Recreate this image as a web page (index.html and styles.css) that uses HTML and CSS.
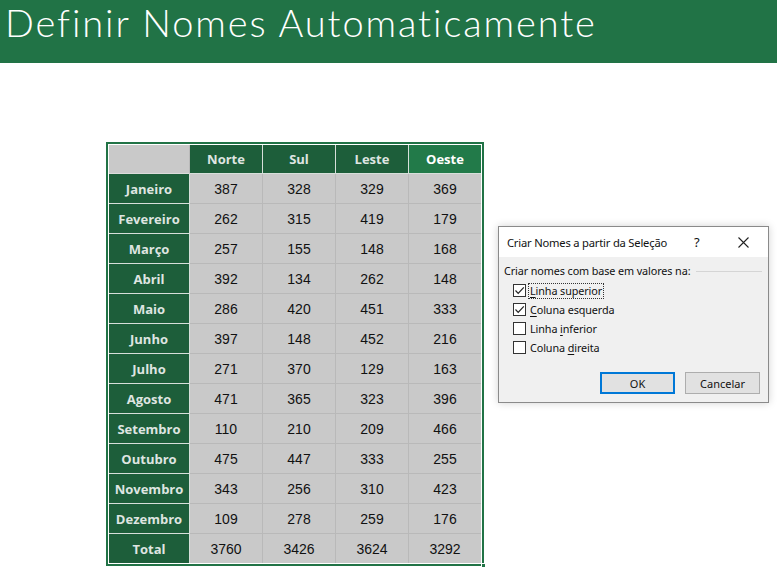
FILE: index.html
```html
<!DOCTYPE html>
<html lang="pt">
<head>
<meta charset="utf-8">
<link rel="stylesheet" href="styles.css">
</head>
<body>
<header class="banner"><h1 class="title">Definir Nomes Automaticamente</h1></header>
<main class="stage">
  <div class="sheet">
    <div class="grid">
      <div class="c corner"></div>
      <div class="c ch">Norte</div>
      <div class="c ch">Sul</div>
      <div class="c ch">Leste</div>
      <div class="c ch sel lastc">Oeste</div>

      <div class="c rh">Janeiro</div><div class="c v">387</div><div class="c v">328</div><div class="c v">329</div><div class="c v lastc">369</div>
      <div class="c rh">Fevereiro</div><div class="c v">262</div><div class="c v">315</div><div class="c v">419</div><div class="c v lastc">179</div>
      <div class="c rh">Março</div><div class="c v">257</div><div class="c v">155</div><div class="c v">148</div><div class="c v lastc">168</div>
      <div class="c rh">Abril</div><div class="c v">392</div><div class="c v">134</div><div class="c v">262</div><div class="c v lastc">148</div>
      <div class="c rh">Maio</div><div class="c v">286</div><div class="c v">420</div><div class="c v">451</div><div class="c v lastc">333</div>
      <div class="c rh">Junho</div><div class="c v">397</div><div class="c v">148</div><div class="c v">452</div><div class="c v lastc">216</div>
      <div class="c rh">Julho</div><div class="c v">271</div><div class="c v">370</div><div class="c v">129</div><div class="c v lastc">163</div>
      <div class="c rh">Agosto</div><div class="c v">471</div><div class="c v">365</div><div class="c v">323</div><div class="c v lastc">396</div>
      <div class="c rh">Setembro</div><div class="c v">110</div><div class="c v">210</div><div class="c v">209</div><div class="c v lastc">466</div>
      <div class="c rh">Outubro</div><div class="c v">475</div><div class="c v">447</div><div class="c v">333</div><div class="c v lastc">255</div>
      <div class="c rh">Novembro</div><div class="c v">343</div><div class="c v">256</div><div class="c v">310</div><div class="c v lastc">423</div>
      <div class="c rh">Dezembro</div><div class="c v">109</div><div class="c v">278</div><div class="c v">259</div><div class="c v lastc">176</div>
      <div class="c rh lastr">Total</div><div class="c v lastr">3760</div><div class="c v lastr">3426</div><div class="c v lastr">3624</div><div class="c v lastr lastc">3292</div>
    </div>
    <span class="handle"></span>
  </div>

  <section class="dialog">
    <div class="dtitle">
      <span class="dcaption">Criar Nomes a partir da Seleção</span>
      <span class="dhelp">?</span>
      <svg class="dclose" width="11" height="11" viewBox="0 0 11 11"><path d="M0.5 0.5 L10.5 10.5 M10.5 0.5 L0.5 10.5" stroke="#222" stroke-width="1.1" fill="none"/></svg>
    </div>
    <div class="dbody">
      <div class="group"><span>Criar nomes com base em valores na:</span><span class="rule"></span></div>
      <ul class="opts">
        <li class="opt"><span class="box"><svg width="11" height="11" viewBox="0 0 11 11"><path d="M1.5 5.5 L4.2 8.3 L9.8 2.3" stroke="#222" stroke-width="1.2" fill="none"/></svg></span><span class="lbl focus"><u>L</u>inha superior</span></li>
        <li class="opt"><span class="box"><svg width="11" height="11" viewBox="0 0 11 11"><path d="M1.5 5.5 L4.2 8.3 L9.8 2.3" stroke="#222" stroke-width="1.2" fill="none"/></svg></span><span class="lbl"><u>C</u>oluna esquerda</span></li>
        <li class="opt"><span class="box"></span><span class="lbl">Linha <u>i</u>nferior</span></li>
        <li class="opt"><span class="box"></span><span class="lbl">Coluna <u>d</u>ireita</span></li>
      </ul>
      <div class="buttons">
        <button class="btn primary">OK</button>
        <button class="btn">Cancelar</button>
      </div>
    </div>
  </section>
</main>
</body>
</html>
```

FILE: styles.css
```css
* { box-sizing: border-box; }
html, body { margin: 0; padding: 0; background: #fff; }
body { width: 777px; height: 575px; overflow: hidden; position: relative; }

.banner {
  height: 63px;
  background: #217346;
  padding: 0 0 0 5px;
}
.title {
  margin: 0;
  font-family: "Lato", "DejaVu Sans", sans-serif;
  font-weight: 300;
  font-size: 38px;
  line-height: 44px;
  color: #fff;
  letter-spacing: 1.9px;
}

.stage { position: relative; height: 512px; }

.sheet {
  position: absolute;
  left: 106px;
  top: 79px;
  border: 2px solid #217346;
  padding: 1px;
  background: #fff;
}
.handle {
  position: absolute;
  right: -4px;
  bottom: -4px;
  width: 5px;
  height: 5px;
  background: #217346;
  border: 1px solid #fff;
}
.grid {
  display: grid;
  grid-template-columns: 81px 73px 73px 73px 72px;
  grid-template-rows: 29px repeat(12, 30px) 29px;
}
.c {
  display: flex;
  align-items: center;
  justify-content: center;
  border-right: 1px solid #b9b9b9;
  border-bottom: 1px solid #b9b9b9;
  background: #c9c9c9;
  font-family: "Liberation Sans", Arial, sans-serif;
  font-size: 14px;
  color: #111;
}
.c.lastc { border-right: 0; }
.c.lastr { border-bottom: 0; }
.corner { background: #c9c9c9; border-bottom-color: #dcdcdc; }
.ch, .rh {
  background: #1d5e3a;
  color: #dfe5e1;
  font-family: "Open Sans", "Liberation Sans", sans-serif;
  font-weight: 700;
  font-size: 13px;
  border-right-color: #d7dfda;
  border-bottom-color: #d7dfda;
}
.ch.sel { background: #227a49; color: #fff; }
.v { padding-top: 1px; }

.dialog {
  position: absolute;
  left: 498px;
  top: 163px;
  width: 271px;
  height: 177px;
  border: 1px solid #8a8a8a;
  background: #f0f0f0;
  box-shadow: 0 0 8px rgba(0,0,0,0.18);
  font-family: "Noto Sans", "Open Sans", sans-serif;
  font-size: 10.8px;
  letter-spacing: -0.1px;
  color: #111;
  display: flex;
  flex-direction: column;
}
.dtitle {
  height: 30px;
  background: #fff;
  display: flex;
  align-items: center;
  padding: 0 0 0 8px;
}
.dcaption { flex: 1; font-size: 11.2px; letter-spacing: -0.2px; }
.dhelp { width: 14px; font-size: 13px; margin-right: 30px; }
.dclose { margin-right: 19px; }

.dbody { padding: 5px 6px 0 5px; flex: 1; display: flex; flex-direction: column; }
.group { display: flex; align-items: center; gap: 6px; height: 16px; }
.rule { flex: 1; height: 1px; background: #d5d5d5; margin-top: 2px; }
.opts { list-style: none; margin: 3px 0 0 0; padding: 0 0 0 9px; }
.opt { display: flex; align-items: center; height: 19px; }
.box {
  width: 13px; height: 13px;
  border: 1px solid #333;
  background: #fff;
  display: flex; align-items: center; justify-content: center;
  margin-right: 3px;
}
.lbl { padding: 0 1px; line-height: 14px; }
.lbl.focus { outline: 1px dotted #333; outline-offset: 0; }
u { text-decoration-thickness: 1px; text-underline-offset: 2px; }

.buttons { display: flex; justify-content: flex-end; gap: 10px; margin-top: 15px; padding-right: 2px; }
.btn {
  width: 75px; height: 22px;
  background: #e1e1e1;
  border: 1px solid #adadad;
  font-family: "Noto Sans", "Open Sans", sans-serif;
  font-size: 11px;
  color: #111;
  padding: 0;
}
.btn.primary { border: 2px solid #0078d7; }
```
